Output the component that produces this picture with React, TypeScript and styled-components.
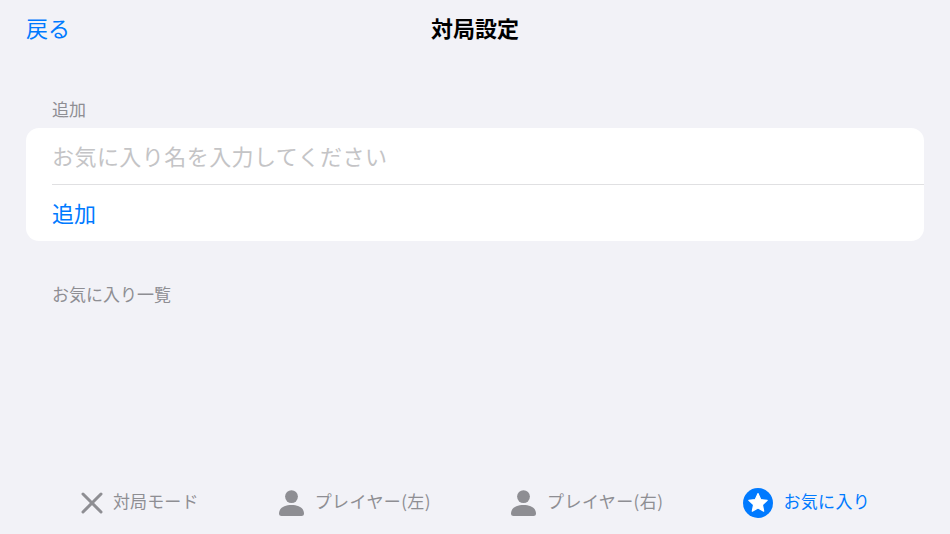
import styled, { createGlobalStyle } from "styled-components";

const GlobalStyle = createGlobalStyle`
  html, body {
    margin: 0;
    padding: 0;
    background: #f2f2f7;
  }
  * {
    box-sizing: border-box;
  }
`;

const tabs = [
  { key: "mode", label: "対局モード", icon: "cross", spacing: 0.1 },
  { key: "left", label: "プレイヤー(左)", icon: "person", spacing: 0.4, wide: true },
  { key: "right", label: "プレイヤー(右)", icon: "person", spacing: 0.4, wide: true },
  { key: "favorite", label: "お気に入り", icon: "star", spacing: 0.3, active: true },
];

const CrossIcon = () => (
  <svg width="22" height="22" viewBox="0 0 22 22">
    <path d="M2 2 L20 20 M20 2 L2 20" stroke="#8e8e93" strokeWidth="3" strokeLinecap="round" />
  </svg>
);

const PersonIcon = () => (
  <svg width="25" height="26" viewBox="0 0 25 26">
    <circle cx="12.5" cy="6.6" r="6.4" fill="#8e8e93" />
    <path
      d="M0 23.5C0 18 5.5 15 12.5 15S25 18 25 23.5C25 25.2 24 26 22.5 26H2.5C1 26 0 25.2 0 23.5Z"
      fill="#8e8e93"
    />
  </svg>
);

const StarIcon = () => (
  <svg width="30" height="30" viewBox="0 0 30 30">
    <circle cx="15" cy="15" r="15" fill="#007aff" />
    <path
      d="M15 5.6L17.7 11.6L24.2 12.3L19.4 16.7L20.7 23.2L15 19.9L9.3 23.2L10.6 16.7L5.8 12.3L12.3 11.6Z"
      fill="#fff"
      stroke="#fff"
      strokeWidth="1.2"
      strokeLinejoin="round"
    />
  </svg>
);

const icons: Record<string, () => JSX.Element> = {
  cross: CrossIcon,
  person: PersonIcon,
  star: StarIcon,
};

export default function App() {
  return (
    <>
      <GlobalStyle />
      <Screen>
        <NavBar>
          <BackBtn>戻る</BackBtn>
          <NavTitle>対局設定</NavTitle>
        </NavBar>
        <Content>
          <SectionLabel>追加</SectionLabel>
          <Card>
            <Row>
              <NameInput placeholder="お気に入り名を入力してください" />
            </Row>
            <Divider />
            <Row>
              <AddBtn>追加</AddBtn>
            </Row>
          </Card>
          <ListLabel>お気に入り一覧</ListLabel>
        </Content>
        <TabBar>
          {tabs.map((tab) => {
            const Icon = icons[tab.icon];
            return (
              <TabItem key={tab.key} $active={tab.active} $wide={tab.wide} $spacing={tab.spacing}>
                <Icon />
                <TabLabel>{tab.label}</TabLabel>
              </TabItem>
            );
          })}
        </TabBar>
      </Screen>
    </>
  );
}

const FONT = `"Noto Sans CJK JP", "Liberation Sans", sans-serif`;

const Screen = styled.div`
  width: 950px;
  height: 534px;
  display: flex;
  flex-direction: column;
  background: #f2f2f7;
  font-family: ${FONT};
  overflow: hidden;
`;
const NavBar = styled.div`
  position: relative;
  height: 58px;
  display: flex;
  align-items: center;
  justify-content: center;
  padding: 0 26px 4px;
`;
const BackBtn = styled.div`
  position: absolute;
  left: 26px;
  top: 11px;
  font-size: 22px;
  line-height: 32px;
  color: #007aff;
`;
const NavTitle = styled.div`
  font-size: 22px;
  line-height: 32px;
  font-weight: 700;
  color: #000;
`;
const Content = styled.div`
  flex: 1;
  padding: 39px 26px 0;
`;
const SectionLabel = styled.div`
  padding-left: 26px;
  height: 31px;
  font-size: 17px;
  line-height: 24px;
  color: #8e8e93;
`;
const ListLabel = styled(SectionLabel)`
  margin-top: 41px;
`;
const Card = styled.div`
  background: #fff;
  border-radius: 13px;
  padding-left: 26px;
`;
const Row = styled.div`
  height: 56px;
  padding-bottom: 2px;
  display: flex;
  align-items: center;
`;
const Divider = styled.div`
  height: 1px;
  background: #e0e0e2;
`;
const NameInput = styled.input`
  width: 100%;
  border: none;
  outline: none;
  padding: 0;
  background: transparent;
  font-family: ${FONT};
  font-size: 22px;
  line-height: 32px;
  letter-spacing: 0.45px;
  &::placeholder {
    color: #c4c4c6;
    opacity: 1;
  }
`;
const AddBtn = styled.div`
  font-size: 22px;
  line-height: 32px;
  color: #007aff;
`;
const TabBar = styled.div`
  height: 64px;
  padding: 2px 80px 0 81px;
  display: flex;
  align-items: center;
  justify-content: space-between;
`;
const TabItem = styled.div<{ $active?: boolean; $wide?: boolean; $spacing: number }>`
  display: flex;
  align-items: center;
  gap: ${({ $wide }) => ($wide ? "11px" : "10px")};
  font-size: 17px;
  line-height: 24px;
  letter-spacing: ${({ $spacing }) => $spacing}px;
  color: ${({ $active }) => ($active ? "#007aff" : "#8e8e93")};
`;
const TabLabel = styled.span`
  margin-bottom: 4px;
`;
